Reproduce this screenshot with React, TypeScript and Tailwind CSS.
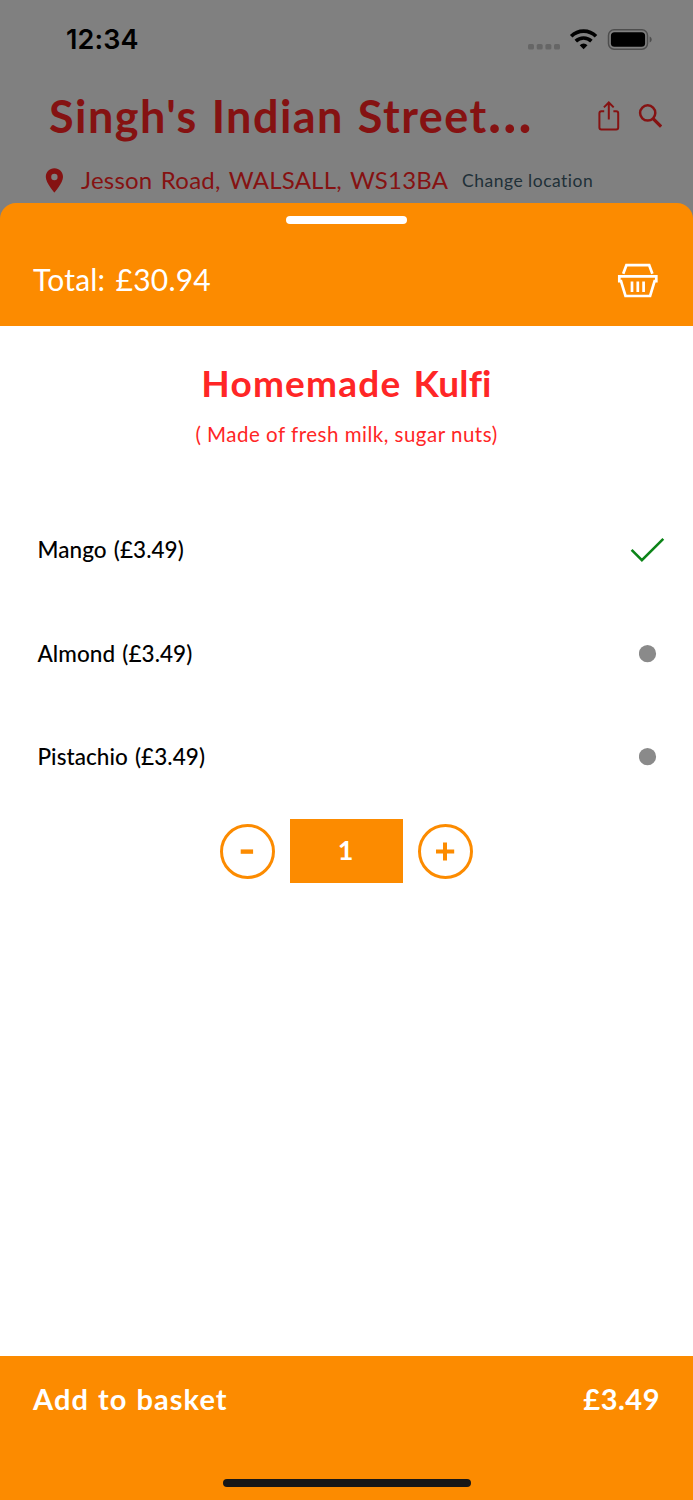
import React from "react";

function StatusBar() {
  return (
    <div className="flex h-[80px] items-center justify-between pl-[66px] pr-[41px]">
      <span className="font-[Inter,sans-serif] text-[27px] font-semibold leading-[40px] tracking-[0.1px] text-black">
        12:34
      </span>
      <svg width="124" height="24" viewBox="0 0 124 24" fill="none">
        <g fill="#666666">
          <rect x="0" y="16" width="6" height="5.5" rx="1.5" />
          <rect x="8.7" y="16" width="6" height="5.5" rx="1.5" />
          <rect x="17.4" y="16" width="6" height="5.5" rx="1.5" />
          <rect x="26" y="16" width="6" height="5.5" rx="1.5" />
        </g>
        <g stroke="#000" strokeWidth="3.6">
          <path d="M43.2 8.2a17.6 17.6 0 0 1 24.8 0" />
          <path d="M47.8 13.1a11.2 11.2 0 0 1 15.6 0" />
        </g>
        <path d="M51.7 17.2a5.6 5.6 0 0 1 7.8 0l-3.9 4z" fill="#000" />
        <rect x="80.5" y="1.8" width="39" height="19.4" rx="5.6" stroke="#4d4d4d" strokeWidth="1.5" />
        <rect x="82.9" y="4.2" width="34.2" height="14.6" rx="3.6" fill="#000" />
        <path d="M121.6 8.4c2.8 1.2 2.8 5 0 6.2z" fill="#4d4d4d" />
      </svg>
    </div>
  );
}

function ShopHeader() {
  return (
    <header className="h-[203px] overflow-hidden bg-[#808080] text-[#851212]">
      <StatusBar />
      <div className="flex h-[69px] items-center justify-between pl-[49px] pr-[31px]">
        <h1 className="flex items-baseline whitespace-nowrap pt-[3px] text-[45px] font-bold leading-[66px] tracking-[1.45px] [word-spacing:1.5px]">
          Singh's Indian Street
          <span className="text-[57px] leading-[40px]">…</span>
        </h1>
        <div className="flex items-center gap-[18px] pt-[2px]">
          <svg width="22" height="30" viewBox="0 0 22 30" fill="none" stroke="currentColor" strokeWidth="2">
            <path d="M6.2 10.2H3.4a2 2 0 0 0-2 2v14.2a2 2 0 0 0 2 2h14.8a2 2 0 0 0 2-2V12.2a2 2 0 0 0-2-2h-2.8" />
            <path d="M10.8 18.6V1.6M5.9 6.4l4.9-4.9 4.9 4.9" />
          </svg>
          <svg width="24" height="24" viewBox="0 0 24 24" fill="none" stroke="currentColor">
            <circle cx="9.7" cy="8.9" r="7.6" strokeWidth="2.5" />
            <path d="M15.1 14.6l8 8" strokeWidth="3.2" />
          </svg>
        </div>
      </div>
      <div className="flex h-[63px] items-center pl-[45px]">
        <svg width="19" height="25" viewBox="0 0 19 25" fill="currentColor">
          <path
            fillRule="evenodd"
            d="M9.4 0.3C4.4 0.3.8 4 .8 8.9c0 5.9 8.6 15.7 8.6 15.7S18 14.8 18 8.9C18 4 14.4.3 9.4.3zm0 5.5a3.2 3.2 0 1 1 0 6.4 3.2 3.2 0 0 1 0-6.4z"
          />
        </svg>
        <span className="ml-[17px] w-[381px] whitespace-nowrap pb-[2px] text-[24px] leading-[30px] tracking-[0.22px] [word-spacing:2px]">
          Jesson Road, WALSALL, WS13BA
        </span>
        <span className="whitespace-nowrap text-[17.5px] leading-[30px] tracking-[0.5px] text-[#203038]">
          Change location
        </span>
      </div>
    </header>
  );
}

function BasketIcon() {
  return (
    <svg width="42" height="36" viewBox="0 0 42 36" fill="none" stroke="#fff" strokeWidth="2.7">
      <path d="M6.2 11.7l3.2-8.5h22.8l3.2 8.5" />
      <path d="M2.3 14.4h37v4.8h-1.7L33.1 34H8.5L4 19.2H2.3z" />
      <path d="M15 19.5v10.4M20.8 19.5v10.4M26.6 19.5v10.4" />
    </svg>
  );
}

const options = [
  { label: "Mango (£3.49)", selected: true },
  { label: "Almond (£3.49)", selected: false },
  { label: "Pistachio (£3.49)", selected: false },
];

function OptionRow({ label, selected }: { label: string; selected: boolean }) {
  return (
    <li className="flex h-[103.7px] items-center justify-between pl-[37.5px] pr-[28px]">
      <span className="whitespace-nowrap text-[22.5px] font-medium leading-[30px] tracking-[0.05px] text-black [word-spacing:1.5px]">
        {label}
      </span>
      {selected ? (
        <svg width="36" height="28" viewBox="0 0 36 28" fill="none" stroke="#0c8418" strokeWidth="2.6">
          <path d="M2.6 13.9l10.3 10.2L34.3 2.8" />
        </svg>
      ) : (
        <svg className="mr-[8px]" width="18" height="18" viewBox="0 0 18 18" fill="#8a8a8a">
          <circle cx="8.5" cy="8.7" r="8.6" />
        </svg>
      )}
    </li>
  );
}

function RoundButton({ plus }: { plus?: boolean }) {
  return (
    <button
      aria-label={plus ? "Increase" : "Decrease"}
      className="flex size-[55px] items-center justify-center rounded-full border-[3px] border-[#fc8b00]"
    >
      <svg width="19" height="19" viewBox="0 0 19 19" stroke="#fc8b00" strokeWidth="4">
        {plus ? <path d="M0 9.6h18.2M9 0.6v18" /> : <path d="M2.7 9.6h12.4" strokeWidth="4.4" />}
      </svg>
    </button>
  );
}

export default function App() {
  return (
    <div className="flex h-[1500px] w-[693px] flex-col overflow-hidden bg-white font-[Lato,sans-serif]">
      <ShopHeader />
      <div className="h-[123px] bg-[#808080]">
        <div className="flex h-full flex-col rounded-t-[16px] bg-[#fc8b00]">
          <div className="mx-auto mt-[12.5px] h-[8.5px] w-[121px] rounded-full bg-white" />
          <div className="mt-[28px] flex h-[56px] items-center justify-between pl-[33px] pr-[34px]">
            <span className="whitespace-nowrap pb-[2px] text-[30px] leading-[54px] tracking-[0.2px] text-white [word-spacing:2.5px]">
              Total: £30.94
            </span>
            <BasketIcon />
          </div>
        </div>
      </div>

      <main className="flex flex-1 flex-col items-center">
        <h2 className="mt-[33px] whitespace-nowrap text-[37px] font-bold leading-[48px] tracking-[1.2px] text-[#ff2626] [word-spacing:2px]">
          Homemade <span className="tracking-[0.2px] [font-variant-ligatures:none]">Kulfi</span>
        </h2>
        <p className="mt-[12px] whitespace-nowrap text-[20.5px] leading-[30px] tracking-[0.5px] text-[#ff2626]">
          ( Made of fresh milk, sugar nuts)
        </p>
        <ul className="mt-[49px] w-full">
          {options.map((option) => (
            <OptionRow key={option.label} {...option} />
          ))}
        </ul>
        <div className="mt-[10px] flex items-center gap-[15px]">
          <RoundButton />
          <div className="flex h-[64px] w-[113px] items-center justify-center bg-[#fc8b00] pb-[2px] pr-[2px] text-[27px] font-bold leading-[62px] text-white">
            1
          </div>
          <RoundButton plus />
        </div>
      </main>

      <footer className="flex h-[144px] flex-col justify-between bg-[#fc8b00] pb-[13px] pt-[18px]">
        <div className="flex items-center justify-between pl-[33px] pr-[33px] text-[29px] font-bold leading-[50px] text-white">
          <span className="tracking-[1.05px] [word-spacing:1px]">Add to basket</span>
          <span className="tracking-[0.5px]">£3.49</span>
        </div>
        <div className="mx-auto h-[8px] w-[248px] rounded-full bg-[#171717]" />
      </footer>
    </div>
  );
}
